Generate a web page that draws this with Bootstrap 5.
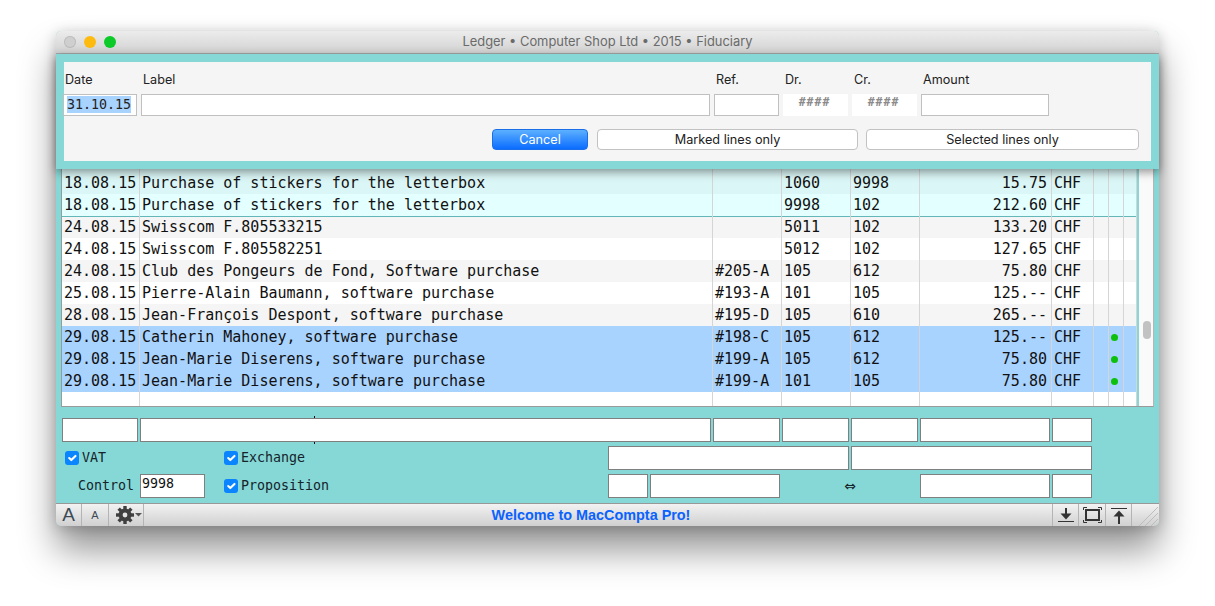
<!DOCTYPE html>
<html lang="en">

<head>
    <meta charset="UTF-8">
    <meta name="viewport" content="width=device-width, initial-scale=1.0">
    <title>Ledger</title>
    <link href="https://cdn.jsdelivr.net/npm/bootstrap@5.3.0/dist/css/bootstrap.min.css" rel="stylesheet">
    <style>
        body {
            min-height: 606px;
            background: #fff;
            padding: 31px 0 0 56px;
            font-family: Inter, "Liberation Sans", sans-serif;
        }

        .mac-window {
            width: 1103px;
            height: 495px;
            border-radius: 5px;
            background: #85d8d6;
            box-shadow: 0 24px 36px rgba(0, 0, 0, .42), 0 2px 14px rgba(0, 0, 0, .2);
        }

        .title-bar {
            height: 23px;
            padding: 0 8px;
            gap: 8px;
            background: linear-gradient(#ececec, #d2d2d2);
            border-bottom: 1px solid #a8a8a8;
            border-radius: 5px 5px 0 0;
        }

        .light {
            width: 12px;
            height: 12px;
            border-radius: 50%;
        }

        .title-text {
            margin-right: 60px;
            font-size: 12.9px;
            color: #6a6a6a;
        }

        /* sheet */
        .sheet {
            position: relative;
            z-index: 2;
            padding: 8px;
            background: #85d8d6;
            box-shadow: 0 3px 9px rgba(0, 0, 0, .42);
        }

        .sheet-panel {
            height: 99px;
            background: #f5f5f5;
        }

        .sheet-grid {
            display: grid;
            grid-template-columns: 74px 569px 65px 65px 65px 128px;
            column-gap: 4px;
            margin-left: -1px;
            padding-top: 10px;
        }

        .sheet-label {
            height: 22px;
            padding-left: 2px;
            font-size: 12.6px;
            line-height: 16px;
            color: #222;
        }

        .box-light {
            height: 22px;
            padding: 0 3px;
            border: 1px solid #c0c0c0;
            border-radius: 0;
            font: 13.3px/20px "DejaVu Sans Mono", monospace;
        }

        .box-light mark {
            padding: 1px 0;
            background: #a9d3ff;
            color: #222;
        }

        .box-hash {
            height: 22px;
            padding-right: 2px;
            background: #fff;
            text-align: center;
            letter-spacing: 1px;
            font: bold 11.5px/17px "DejaVu Sans Mono", monospace;
            color: #8a8a8a;
        }

        .sheet-buttons {
            gap: 8px;
            margin: 13px 0 0 428px;
        }

        .mac-btn {
            height: 21px;
            padding: 0;
            border: 1px solid #c2c2c2;
            border-radius: 4px;
            background: #fff;
            font-size: 12.7px;
            line-height: 18px;
            color: #222;
        }

        .mac-btn.go {
            width: 96px;
            margin-right: 1px;
            border-color: #1a6fe8;
            background: linear-gradient(#5db0ff, #0a6cff);
            color: #fff;
        }

        .w-marked { width: 261px; }
        .w-selected { width: 273px; }

        /* ledger */
        .ledger-panel {
            height: 238px;
            margin: 0 5px;
            background: #fff;
            border-left: 1px solid #9a9a9a;
            border-right: 1px solid #b5b5b5;
            border-bottom: 1px solid #9a9a9a;
        }

        .ledger-table {
            width: 1075px;
            table-layout: fixed;
            border-collapse: separate;
            border-spacing: 0;
            font: 15px/22px "DejaVu Sans Mono", monospace;
            --bs-table-color: #111;
            --bs-table-bg: #fff;
        }

        .ledger-table.table > tbody > tr > td {
            height: 22px;
            padding: 0 2px;
            border: 0;
            border-right: 1px solid #d5d5d5;
            box-shadow: none;
            white-space: nowrap;
            overflow: hidden;
        }

        .ledger-table.table > tbody > tr > td.amt {
            padding-right: 4px;
            text-align: right;
        }

        .ledger-table.table > tbody > tr > td.dot-cell {
            padding: 0 4px 0 0;
            text-align: center;
            line-height: 0;
            vertical-align: middle;
        }

        .ledger-table.table > tbody > tr.first > td {
            height: 25px;
            padding-top: 3px;
        }

        .ledger-table.table > tbody > tr.tail > td { height: 14px; }
        .ledger-table.table > tbody > tr.split > td { box-shadow: inset 0 1px 0 #62b8b8; }

        tr.tone-mint { --bs-table-bg: #dbf6f6; }
        tr.tone-cyan { --bs-table-bg: #e3ffff; }
        tr.tone-grey { --bs-table-bg: #f5f5f5; }
        tr.tone-sel { --bs-table-bg: #a9d3ff; }

        .green-dot {
            display: inline-block;
            width: 7px;
            height: 7px;
            border-radius: 50%;
            background: #0cc00c;
        }

        .scroll-gap {
            width: 2px;
            background: #85d8d6;
        }

        .scroll-track {
            width: 14px;
            padding: 152px 2px 0 4px;
            background: #fafafa;
        }

        .scroll-thumb {
            height: 18px;
            border-radius: 4px;
            background: #c2c2c2;
        }

        /* lower form */
        .entry-form {
            height: 96px;
            padding: 11px 0 0 6px;
            gap: 4px;
            font: 13.3px/24px "DejaVu Sans Mono", monospace;
            color: #15232b;
        }

        .entry-row { height: 24px; gap: 2px; }

        .fld {
            height: 24px;
            padding: 0 1px;
            border: 1px solid #7f7f7f;
            border-radius: 0;
            font: 13.3px/16px "DejaVu Sans Mono", monospace;
            color: #111;
            flex: none;
        }

        .fld-top { width: 65px; padding-bottom: 5px; }

        .w40 { width: 40px; }
        .w67 { width: 67px; }
        .w76 { width: 76px; }
        .w130 { width: 130px; }
        .w241 { width: 241px; }

        .field-wrap {
            position: relative;
            width: 571px;
        }

        .ibeam {
            position: absolute;
            left: 174px;
            top: -2px;
            width: 1px;
            height: 28px;
            background: #111;
        }

        .field-wrap .fld {
            position: relative;
            width: 100%;
        }

        .check-vat { width: 160px; padding-left: 3px; }
        .check-wide { width: 382px; }
        .check-prop { margin-left: 17px; }
        .label-control { width: 76px; padding-left: 16px; }

        .check-box.form-check-input {
            width: 14px;
            height: 14px;
            margin: 0 3px 0 0;
            border: 0;
            border-radius: 3px;
            background-color: #0a84ff;
            flex: none;
        }

        .swap-mark {
            width: 136px;
            text-align: center;
            font-family: "DejaVu Sans", sans-serif;
            font-size: 14px;
        }

        /* status bar */
        .status-bar {
            height: 23px;
            background: linear-gradient(#f2f2f2, #d0d0d0);
            border-top: 1px solid #989898;
            border-radius: 0 0 5px 5px;
            color: #444;
        }

        .tool {
            border-right: 1px solid #b4b4b4;
            font-family: "Liberation Sans", sans-serif;
            line-height: 22px;
            color: #3c4a55;
        }

        .tool-big { width: 26px; font-size: 19px; }
        .tool-small { width: 27px; font-size: 11px; }
        .tool-gear { width: 35px; padding-left: 5px; }
        .tool-r { width: 26px; border-right: 0; border-left: 1px solid #b4b4b4; }
        .tool-r2 { width: 27px; }
        .tool-grip { width: 28px; border-left: 1px solid #b4b4b4; }

        .welcome {
            padding-right: 14px;
            font: bold 14.4px/22px "Liberation Sans", sans-serif;
            color: #0a62ff;
        }
    </style>
</head>

<body>
    <div class="mac-window d-flex flex-column">
        <div class="title-bar d-flex align-items-center">
            <span class="light" style="background:#cfcfcf;box-shadow:inset 0 0 0 1px #bdbdbd"></span>
            <span class="light" style="background:#fdbb0f"></span>
            <span class="light" style="background:#0ccb28"></span>
            <div class="title-text flex-grow-1 text-center text-nowrap">Ledger • Computer Shop Ltd • 2015 • Fiduciary</div>
        </div>

        <!-- Sheet -->
        <div class="sheet">
            <div class="sheet-panel">
                <div class="sheet-grid">
                    <div class="sheet-label">Date</div>
                    <div class="sheet-label">Label</div>
                    <div class="sheet-label">Ref.</div>
                    <div class="sheet-label">Dr.</div>
                    <div class="sheet-label">Cr.</div>
                    <div class="sheet-label">Amount</div>
                    <div class="form-control box-light"><mark>31.10.15</mark></div>
                    <input class="form-control box-light" type="text">
                    <input class="form-control box-light" type="text">
                    <div class="box-hash">####</div>
                    <div class="box-hash">####</div>
                    <input class="form-control box-light" type="text">
                </div>
                <div class="sheet-buttons d-flex">
                    <button class="btn mac-btn go">Cancel</button>
                    <button class="btn mac-btn w-marked">Marked lines only</button>
                    <button class="btn mac-btn w-selected">Selected lines only</button>
                </div>
            </div>
        </div>

        <!-- Ledger -->
        <div class="ledger-panel d-flex">
            <table class="table table-borderless ledger-table mb-0">
                <colgroup>
                    <col style="width:78px"><col style="width:573px"><col style="width:69px"><col style="width:69px"><col style="width:69px">
                    <col style="width:132px"><col style="width:42px"><col style="width:15px"><col style="width:15px"><col style="width:13px">
                </colgroup>
                <tbody id="ledgerRows"></tbody>
            </table>
            <div class="scroll-gap"></div>
            <div class="scroll-track">
                <div class="scroll-thumb"></div>
            </div>
        </div>

        <!-- Entry form -->
        <div class="entry-form d-flex flex-column">
            <div class="entry-row d-flex">
                <input class="form-control fld w76" type="text">
                <div class="field-wrap">
                    <span class="ibeam"></span>
                    <input class="form-control fld" type="text">
                </div>
                <input class="form-control fld w67" type="text">
                <input class="form-control fld w67" type="text">
                <input class="form-control fld w67" type="text">
                <input class="form-control fld w130" type="text">
                <input class="form-control fld w40" type="text">
            </div>
            <div class="entry-row d-flex">
                <label class="check-vat d-flex align-items-center">
                    <input class="form-check-input check-box" type="checkbox" checked>VAT
                </label>
                <label class="check-wide d-flex align-items-center">
                    <input class="form-check-input check-box" type="checkbox" checked>Exchange
                </label>
                <input class="form-control fld w241" type="text">
                <input class="form-control fld w241" type="text">
            </div>
            <div class="entry-row d-flex">
                <span class="label-control">Control</span>
                <input class="form-control fld fld-top" type="text" value="9998">
                <label class="check-wide check-prop d-flex align-items-center">
                    <input class="form-check-input check-box" type="checkbox" checked>Proposition
                </label>
                <input class="form-control fld w40" type="text">
                <input class="form-control fld w130" type="text">
                <span class="swap-mark">⇔</span>
                <input class="form-control fld w130" type="text">
                <input class="form-control fld w40" type="text">
            </div>
        </div>

        <!-- Status bar -->
        <div class="status-bar d-flex">
            <div class="tool tool-big text-center">A</div>
            <div class="tool tool-small text-center">A</div>
            <div class="tool tool-gear d-flex align-items-center justify-content-center">
                <svg width="28" height="20" viewBox="0 0 28 20">
                    <g fill="#3f3f3f" transform="translate(10 10)">
                        <circle r="6.5"></circle>
                        <rect x="-1.7" y="-9" width="3.4" height="18"></rect>
                        <rect x="-1.7" y="-9" width="3.4" height="18" transform="rotate(45)"></rect>
                        <rect x="-1.7" y="-9" width="3.4" height="18" transform="rotate(90)"></rect>
                        <rect x="-1.7" y="-9" width="3.4" height="18" transform="rotate(135)"></rect>
                        <circle r="2.4" fill="#e2e2e2"></circle>
                    </g>
                    <path d="M20 8h7l-3.500 3.500z" fill="#555"></path>
                </svg>
            </div>
            <div class="welcome flex-grow-1 text-center">Welcome to MacCompta Pro!</div>
            <div class="tool tool-r d-flex align-items-center justify-content-center">
                <svg width="18" height="18" viewBox="0 0 18 18" fill="none" stroke="#333">
                    <path d="M1 15.500h16" stroke-width="1"></path>
                    <path d="M9 2v10" stroke-width="2"></path>
                    <path d="M3.500 7.500L9 13.500l5.500-6z" fill="#333" stroke="none"></path>
                </svg>
            </div>
            <div class="tool tool-r tool-r2 d-flex align-items-center justify-content-center">
                <svg width="19" height="16" viewBox="0 0 19 16" fill="none" stroke="#333">
                    <rect x="3" y="3" width="13" height="10" stroke-width="2"></rect>
                    <path d="M.5 3V.5H4M15 .5h3.500V3M18.500 13v2.500H15M4 15.500H.5V13" stroke-width="1"></path>
                </svg>
            </div>
            <div class="tool tool-r d-flex align-items-center justify-content-center">
                <svg width="18" height="18" viewBox="0 0 18 18" fill="none" stroke="#333">
                    <path d="M1 2.500h16" stroke-width="1"></path>
                    <path d="M9 7v11" stroke-width="2"></path>
                    <path d="M3.500 10.500L9 4.500l5.500 6z" fill="#333" stroke="none"></path>
                </svg>
            </div>
            <div class="tool-grip d-flex align-items-end justify-content-end">
                <svg width="22" height="21" viewBox="0 0 22 21" fill="none" stroke="#bdbdbd">
                    <path d="M2 21L21 2M8 21L21 8M14 21l7-7"></path>
                </svg>
            </div>
        </div>
    </div>

    <script>
        const lines = [
            ['18.08.15', 'Purchase of stickers for the letterbox', '', '1060', '9998', '15.75', 'first tone-mint'],
            ['18.08.15', 'Purchase of stickers for the letterbox', '', '9998', '102', '212.60', 'tone-cyan'],
            ['24.08.15', 'Swisscom F.805533215', '', '5011', '102', '133.20', 'split tone-grey'],
            ['24.08.15', 'Swisscom F.805582251', '', '5012', '102', '127.65', ''],
            ['24.08.15', 'Club des Pongeurs de Fond, Software purchase', '#205-A', '105', '612', '75.80', 'tone-grey'],
            ['25.08.15', 'Pierre-Alain Baumann, software purchase', '#193-A', '101', '105', '125.--', ''],
            ['28.08.15', 'Jean-François Despont, software purchase', '#195-D', '105', '610', '265.--', 'tone-grey'],
            ['29.08.15', 'Catherin Mahoney, software purchase', '#198-C', '105', '612', '125.--', 'tone-sel'],
            ['29.08.15', 'Jean-Marie Diserens, software purchase', '#199-A', '105', '612', '75.80', 'tone-sel'],
            ['29.08.15', 'Jean-Marie Diserens, software purchase', '#199-A', '101', '105', '75.80', 'tone-sel']
        ];

        const rows = lines.map(line => {
            const dot = line[6] === 'tone-sel' ? '<span class="green-dot"></span>' : '';
            return `<tr class="${line[6]}">
                <td>${line[0]}</td><td>${line[1]}</td><td>${line[2]}</td><td>${line[3]}</td><td>${line[4]}</td>
                <td class="amt">${line[5]}</td><td>CHF</td><td></td><td class="dot-cell">${dot}</td><td></td>
            </tr>`;
        });
        rows.push('<tr class="tail"><td></td><td></td><td></td><td></td><td></td><td></td><td></td><td></td><td></td><td></td></tr>');
        document.getElementById('ledgerRows').innerHTML = rows.join('');
    </script>
    <script src="https://cdn.jsdelivr.net/npm/bootstrap@5.3.0/dist/js/bootstrap.bundle.min.js"></script>
</body>

</html>
